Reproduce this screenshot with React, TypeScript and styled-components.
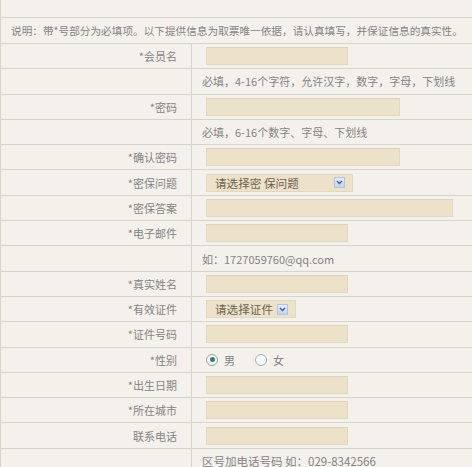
import styled, { createGlobalStyle } from "styled-components";

const GlobalStyle = createGlobalStyle`
  html, body {
    margin: 0;
    padding: 0;
    background-color: #f4f1ec;
  }
  body {
    font-family: "Noto Sans CJK SC", "Liberation Sans", sans-serif;
    color: #858382;
    font-size: 11px;
  }
`;

const Wrapper = styled.div`
  width: 472px;
  height: 467px;
  overflow: hidden;
  border-left: 1px solid #d9d3c9;
  box-sizing: border-box;
`;

const TopSpace = styled.div`
  height: 17px;
`;

const Note = styled.div`
  height: 26px;
  border-top: 1px solid #d9d3c9;
  box-sizing: border-box;
  display: flex;
  align-items: center;
  padding-left: 10px;
  white-space: nowrap;
  font-size: 10.65px;
`;

const Row = styled.div`
  display: grid;
  grid-template-columns: 191px 1fr;
  height: 25.31px;
  border-top: 1px solid #d9d3c9;
  box-sizing: border-box;
`;

const Label = styled.div`
  border-right: 1px solid #d9d3c9;
  display: flex;
  align-items: center;
  justify-content: flex-end;
  padding-right: 14px;
  white-space: nowrap;
`;

const Value = styled.div`
  display: flex;
  align-items: center;
  padding-left: 10px;
  white-space: nowrap;
`;

const Hint = styled.span<{ size?: number }>`
  font-size: ${(p) => p.size || 11}px;
`;

const TextInput = styled.div<{ w: number }>`
  margin-left: 4px;
  width: ${(p) => p.w}px;
  height: 18px;
  box-sizing: border-box;
  background-color: #ece2ca;
  border: 1px solid #e2d8c0;
  border-top-color: #ddd3ba;
`;

const Select = styled.div<{ w: number }>`
  margin-left: 4px;
  width: ${(p) => p.w}px;
  height: 18px;
  box-sizing: border-box;
  background-color: #ece2ca;
  border: 1px solid #e2d8c0;
  display: flex;
  align-items: center;
  padding: 0 7px 0 8px;
  justify-content: space-between;
  font-size: 11.6px;
  color: #6e634e;
`;

const Arrow = styled.span`
  width: 11px;
  height: 11px;
  box-sizing: border-box;
  background: linear-gradient(#e3ebf8, #c4d3ee);
  border: 1px solid #b3c4e2;
  display: flex;
  align-items: center;
  justify-content: center;
`;

const RadioGroup = styled.div`
  display: flex;
  align-items: center;
  margin-left: 4px;
  gap: 20px;
`;

const RadioOption = styled.label`
  display: flex;
  align-items: center;
  gap: 6px;
  font-size: 11px;
`;

const Radio = styled.span<{ checked?: boolean }>`
  width: 12px;
  height: 12px;
  box-sizing: border-box;
  border-radius: 50%;
  border: 1px solid ${(p) => (p.checked ? "#8fa2a2" : "#9fb0c4")};
  background: #f7f8f8;
  display: flex;
  align-items: center;
  justify-content: center;
  &::after {
    content: "";
    width: 5px;
    height: 5px;
    border-radius: 50%;
    background: ${(p) => (p.checked ? "#3f7a78" : "transparent")};
  }
`;

function ChevronDown() {
  return (
    <svg width="7" height="5" viewBox="0 0 7 5">
      <path d="M1 1 L3.5 3.5 L6 1" fill="none" stroke="#3f5f9e" strokeWidth="1.4" />
    </svg>
  );
}

type Field =
  | { kind: "input"; label: string; w: number }
  | { kind: "hint"; text: string; size?: number }
  | { kind: "select"; label: string; w: number; text: string }
  | { kind: "radio"; label: string };

const fields: Field[] = [
  { kind: "input", label: "*会员名", w: 142 },
  { kind: "hint", text: "必填，4-16个字符，允许汉字，数字，字母，下划线" },
  { kind: "input", label: "*密码", w: 194 },
  { kind: "hint", text: "必填，6-16个数字、字母、下划线" },
  { kind: "input", label: "*确认密码", w: 194 },
  { kind: "select", label: "*密保问题", w: 147, text: "请选择密 保问题" },
  { kind: "input", label: "*密保答案", w: 247 },
  { kind: "input", label: "*电子邮件", w: 142 },
  { kind: "hint", text: "如：1727059760@qq.com" },
  { kind: "input", label: "*真实姓名", w: 142 },
  { kind: "select", label: "*有效证件", w: 90, text: "请选择证件" },
  { kind: "input", label: "*证件号码", w: 142 },
  { kind: "radio", label: "*性别" },
  { kind: "input", label: "*出生日期", w: 142 },
  { kind: "input", label: "*所在城市", w: 142 },
  { kind: "input", label: "联系电话", w: 142 },
  { kind: "hint", text: "区号加电话号码 如：029-8342566", size: 11.5 },
];

function App() {
  return (
    <Wrapper>
      <GlobalStyle />
      <TopSpace />
      <Note>说明：带*号部分为必填项。以下提供信息为取票唯一依据，请认真填写，并保证信息的真实性。</Note>
      {fields.map((f, i) => (
        <Row key={i}>
          <Label>{f.kind === "hint" ? "" : f.label}</Label>
          <Value>
            {f.kind === "input" && <TextInput w={f.w} />}
            {f.kind === "hint" && <Hint size={f.size}>{f.text}</Hint>}
            {f.kind === "select" && (
              <Select w={f.w}>
                <span>{f.text}</span>
                <Arrow>
                  <ChevronDown />
                </Arrow>
              </Select>
            )}
            {f.kind === "radio" && (
              <RadioGroup>
                <RadioOption>
                  <Radio checked />男
                </RadioOption>
                <RadioOption>
                  <Radio />女
                </RadioOption>
              </RadioGroup>
            )}
          </Value>
        </Row>
      ))}
    </Wrapper>
  );
}

export default App;
